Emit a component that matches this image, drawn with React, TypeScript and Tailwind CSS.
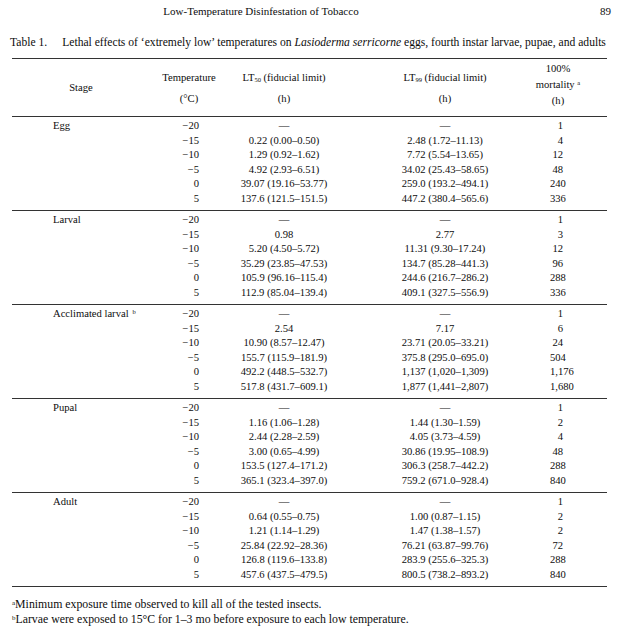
const M = '\u2212';

type Row = [string, string, string, string];

const blocks: { stage: string; sup?: string; rows: Row[] }[] = [
  {
    stage: 'Egg',
    rows: [
      [`${M}20`, '—', '—', '1'],
      [`${M}15`, '0.22 (0.00–0.50)', '2.48 (1.72–11.13)', '4'],
      [`${M}10`, '1.29 (0.92–1.62)', '7.72 (5.54–13.65)', '12'],
      [`${M}5`, '4.92 (2.93–6.51)', '34.02 (25.43–58.65)', '48'],
      ['0', '39.07 (19.16–53.77)', '259.0 (193.2–494.1)', '240'],
      ['5', '137.6 (121.5–151.5)', '447.2 (380.4–565.6)', '336'],
    ],
  },
  {
    stage: 'Larval',
    rows: [
      [`${M}20`, '—', '—', '1'],
      [`${M}15`, '0.98', '2.77', '3'],
      [`${M}10`, '5.20 (4.50–5.72)', '11.31 (9.30–17.24)', '12'],
      [`${M}5`, '35.29 (23.85–47.53)', '134.7 (85.28–441.3)', '96'],
      ['0', '105.9 (96.16–115.4)', '244.6 (216.7–286.2)', '288'],
      ['5', '112.9 (85.04–139.4)', '409.1 (327.5–556.9)', '336'],
    ],
  },
  {
    stage: 'Acclimated larval',
    sup: 'b',
    rows: [
      [`${M}20`, '—', '—', '1'],
      [`${M}15`, '2.54', '7.17', '6'],
      [`${M}10`, '10.90 (8.57–12.47)', '23.71 (20.05–33.21)', '24'],
      [`${M}5`, '155.7 (115.9–181.9)', '375.8 (295.0–695.0)', '504'],
      ['0', '492.2 (448.5–532.7)', '1,137 (1,020–1,309)', '1,176'],
      ['5', '517.8 (431.7–609.1)', '1,877 (1,441–2,807)', '1,680'],
    ],
  },
  {
    stage: 'Pupal',
    rows: [
      [`${M}20`, '—', '—', '1'],
      [`${M}15`, '1.16 (1.06–1.28)', '1.44 (1.30–1.59)', '2'],
      [`${M}10`, '2.44 (2.28–2.59)', '4.05 (3.73–4.59)', '4'],
      [`${M}5`, '3.00 (0.65–4.99)', '30.86 (19.95–108.9)', '48'],
      ['0', '153.5 (127.4–171.2)', '306.3 (258.7–442.2)', '288'],
      ['5', '365.1 (323.4–397.0)', '759.2 (671.0–928.4)', '840'],
    ],
  },
  {
    stage: 'Adult',
    rows: [
      [`${M}20`, '—', '—', '1'],
      [`${M}15`, '0.64 (0.55–0.75)', '1.00 (0.87–1.15)', '2'],
      [`${M}10`, '1.21 (1.14–1.29)', '1.47 (1.38–1.57)', '2'],
      [`${M}5`, '25.84 (22.92–28.36)', '76.21 (63.87–99.76)', '72'],
      ['0', '126.8 (119.6–133.8)', '283.9 (255.6–325.3)', '288'],
      ['5', '457.6 (437.5–479.5)', '800.5 (738.2–893.2)', '840'],
    ],
  },
];

const cols = 'grid grid-cols-[138px_78px_112px_210px_57px]';

export default function App() {
  return (
    <div className="w-[619px] h-[640px] bg-white pt-[4px] text-[10.6px] text-[#0d0d0d] font-['Liberation_Serif',serif]">
      <div className="flex h-[14px] items-center text-[11px] leading-[14px]">
        <div className="w-[522px] text-center">Low-Temperature Disinfestation of Tobacco</div>
        <div className="ml-auto pr-[8px]">89</div>
      </div>

      <p className="mt-[18px] whitespace-nowrap pl-[10px] text-[11.6px] leading-[14px]">
        Table 1.<span className="inline-block w-[15px]" />Lethal effects of ‘extremely low’ temperatures on{' '}
        <i>Lasioderma serricorne</i> eggs, fourth instar larvae, pupae, and adults
      </p>

      <div className="mx-[12px] mt-[8px] w-[595px]">
        <div className={`${cols} h-[58px] items-center border-t border-[#333]`}>
          <div className="text-center">Stage</div>
          <div className="text-center leading-[21px]">
            <div>Temperature</div>
            <div>(°C)</div>
          </div>
          <div className="text-center leading-[21px]">
            <div>
              LT<sub className="text-[6.5px]">50</sub> (fiducial limit)
            </div>
            <div>(h)</div>
          </div>
          <div className="text-center leading-[21px]">
            <div>
              LT<sub className="text-[6.5px]">99</sub> (fiducial limit)
            </div>
            <div>(h)</div>
          </div>
          <div className="flex w-[16px] flex-col items-center pb-[5px] leading-[16px]">
            <div className="whitespace-nowrap">100%</div>
            <div className="whitespace-nowrap">
              mortality <sup className="text-[6.5px]">a</sup>
            </div>
            <div>(h)</div>
          </div>
        </div>

        {blocks.map((b) => (
          <div key={b.stage} className={`${cols} border-t border-[#333] pt-[2px] pb-[4px] leading-[14.5px]`}>
            {b.rows.map((r, i) => (
              <div key={i} className="contents">
                <div className="whitespace-nowrap pl-[41px]">
                  {i === 0 && (
                    <>
                      {b.stage}
                      {b.sup && <sup className="ml-[4px] text-[6.5px]">{b.sup}</sup>}
                    </>
                  )}
                </div>
                <div className="pr-[29px] text-right">{r[0]}</div>
                <div className="whitespace-nowrap text-center">{r[1]}</div>
                <div className="whitespace-nowrap text-center">{r[2]}</div>
                <div className="pr-[44px] text-right">{r[3]}</div>
              </div>
            ))}
          </div>
        ))}

        <div className="border-t border-[#333] pt-[10px] text-[11.8px] leading-[15px]">
          <p>
            <sup className="text-[7px]">a</sup>Minimum exposure time observed to kill all of the tested insects.
          </p>
          <p>
            <sup className="text-[7px]">b</sup>Larvae were exposed to 15°C for 1–3 mo before exposure to each low temperature.
          </p>
        </div>
      </div>
    </div>
  );
}
